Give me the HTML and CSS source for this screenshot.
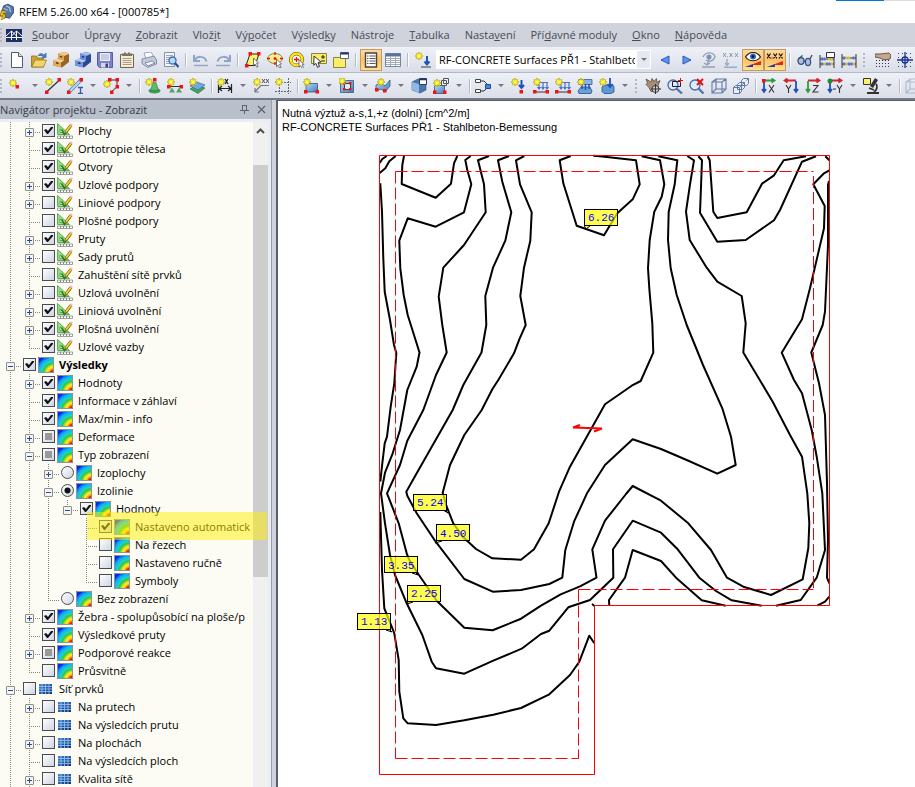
FILE: index.html
```html
<!DOCTYPE html>
<html lang="cs">
<head>
<meta charset="utf-8">
<title>RFEM 5.26.00 x64 - [000785*]</title>
<link rel="stylesheet" href="styles.css">
</head>
<body>
<svg class="defs" aria-hidden="true">
<defs>
<linearGradient id="gBlue" x1="0" y1="0" x2="1" y2="1"><stop offset="0" stop-color="#b5d8f6"/><stop offset="1" stop-color="#3f7fc0"/></linearGradient>
<linearGradient id="gMesh" x1="0" y1="0" x2="1" y2="1"><stop offset="0" stop-color="#3f86d8"/><stop offset="1" stop-color="#0c2f70"/></linearGradient>
<g id="star"><path d="M4 0v8M0 4h8M1.2 1.2l5.6 5.6M6.8 1.2l-5.6 5.6" stroke="#a89c3c" stroke-width="1.6"/><path d="M4 .5v7M.5 4h7M1.5 1.500l5 5M6.500 1.500l-5 5" stroke="#fff000" stroke-width="1"/><circle cx="4" cy="4" r="1.800" fill="#ffff5a"/></g>
<g id="node"><path d="M0 0h3.500v3.500h-3.500z" fill="#f01414"/></g>
<g id="hand"><path d="M0 0l5 5-2 .4 1.6 3-1.4.8-1.6-3-1.6 1.4z" fill="#fff" stroke="#555" stroke-width=".8"/></g>
<symbol id="i-new" viewBox="0 0 16 16"><path d="M2.500.5h7l4 4v11h-11z" fill="#fff" stroke="#555b6b"/><path d="M9.500.5v4h4" fill="#dde4f0" stroke="#555b6b"/></symbol>
<symbol id="i-open" viewBox="0 0 16 16"><path d="M.5 15v-11h5l1 2h6v9z" fill="#d0a030" stroke="#8f7020" stroke-width=".8"/><path d="M.8 15l3.200-7h11.500l-3 7z" fill="#f0d670" stroke="#9a7a20" stroke-width=".8"/><path d="M7 4c1-3 5-3 6.500 0M15 1v4.500h-4z" fill="#4a7ab8" stroke="#4a7ab8"/></symbol>
<symbol id="i-boxb" viewBox="0 0 16 16"><path d="M5 1.500l7-1.500 4 2v8l-7 5.500-9-2v-5l5-2z" fill="#9a6424"/><path d="M5 1.500l7-1.500 4 2-5 2z" fill="#f2cc8a"/><path d="M5 1.500l6 2v5l-6-2z" fill="#dda85a"/><path d="M0 8.500l4-2 7 2-3 2z" fill="#f6d69c"/><path d="M0 8.500l8 2v5l-8-2z" fill="#e0ac60"/><path d="M7 4.500l2 .7M3 10.800l2.500.6" stroke="#402a0a" stroke-width="1.300"/></symbol>
<symbol id="i-boxu" viewBox="0 0 16 16"><path d="M5 1.500l7-1.500 4 2v8l-7 5.500-9-2v-5l5-2z" fill="#2c4a94"/><path d="M5 1.500l7-1.500 4 2-5 2z" fill="#a9c0f0"/><path d="M5 1.500l6 2v5l-6-2z" fill="#6b90dc"/><path d="M0 8.500l4-2 7 2-3 2z" fill="#b5caf5"/><path d="M0 8.500l8 2v5l-8-2z" fill="#7398e0"/><path d="M7 4.500l2 .7M3 10.800l2.500.6" stroke="#101f48" stroke-width="1.300"/></symbol>
<symbol id="i-save" viewBox="0 0 16 16"><path d="M.5.5h15v15h-13l-2-2z" fill="#7d82c4" stroke="#5a5f9c"/><path d="M3 1h10v8h-10z" fill="#eef0fb"/><path d="M4 3h8M4 5h8M4 7h8" stroke="#a3a9d0"/><path d="M4 11h8v4.500h-8z" fill="#d4d7ea"/><path d="M8.500 11.500h2.500v4h-2.500z" fill="#3a4274"/></symbol>
<symbol id="i-clip" viewBox="0 0 16 16"><path d="M1.500 2.500h13v13h-13z" fill="#f5ecd6" stroke="#6d624c"/><path d="M3 1.500h2v-1h2v1h2v-1h2v1h2v2.500h-10z" fill="#7c7260"/><path d="M3.500 6.500h9M3.500 8.500h9M3.500 10.500h9M3.500 12.500h9" stroke="#a89c84"/></symbol>
<symbol id="i-print" viewBox="0 0 16 16"><path d="M3 1l7-1 3 5-8 2z" fill="#fff" stroke="#8890a8" stroke-width=".8"/><path d="M1 7l12-3 2.500 4v4l-9 3.500-5.500-4z" fill="#c3c9de" stroke="#737a94" stroke-width=".8"/><path d="M4 11l7-2 3 2-7 3z" fill="#f5f7ff" stroke="#6a7494" stroke-width=".8"/></symbol>
<symbol id="i-prev" viewBox="0 0 16 16"><path d="M1.500.5h10v14h-10z" fill="#f3f5fa" stroke="#8990a6"/><path d="M3 3.500h7M3 5.500h7M3 7.500h3M3 9.500h3M3 11.500h4" stroke="#9ea5ba"/><circle cx="9.500" cy="8.500" r="3.500" fill="#b3dcf7" stroke="#3d6fae" stroke-width="1.300"/><path d="M12 11l3.500 4" stroke="#264f8c" stroke-width="2"/></symbol>
<symbol id="i-undo" viewBox="0 0 16 16"><path d="M1 3v6h6M1.500 8.500c3-5 10-5 12 1" fill="none" stroke="#8fa5c8" stroke-width="2"/><path d="M1 13.500h14" stroke="#9aa7c0" stroke-width="1.500"/></symbol>
<symbol id="i-redo" viewBox="0 0 16 16"><path d="M15 3v6h-6M14.500 8.500c-3-5-10-5-12 1" fill="none" stroke="#8fa5c8" stroke-width="2"/><path d="M1 13.500h14" stroke="#9aa7c0" stroke-width="1.500"/></symbol>
<symbol id="i-sel1" viewBox="0 0 16 16"><path d="M5 2h9l-4 11.500h-9z" fill="#fbf36a" stroke="#222"/><use href="#node" x="3.500" y="0"/><use href="#node" x="12" y="0"/><use href="#node" x="0" y="12"/><use href="#hand" x="8.500" y="6"/></symbol>
<symbol id="i-sel2" viewBox="0 0 16 16"><ellipse cx="8" cy="6.500" rx="7.300" ry="5" fill="#f8ee8a" stroke="#8d8650"/><path d="M8 0v3M8 10v3M0 6.500h3M13 6.500h3M6.500 6.500h3M8 5v3" stroke="#e31212" stroke-width="1.300"/><use href="#hand" x="9.500" y="7"/></symbol>
<symbol id="i-sel3" viewBox="0 0 16 16"><circle cx="7.500" cy="7.500" r="5.800" fill="#fff" stroke="#7a6900" stroke-width="3.600"/><circle cx="7.500" cy="7.500" r="5.800" fill="none" stroke="#ffe81a" stroke-width="2.200"/><path d="M7.500 5v5M5 7.500h5" stroke="#e31212" stroke-width="1.300"/><use href="#hand" x="10" y="7.500"/></symbol>
<symbol id="i-sel4" viewBox="0 0 16 16"><path d="M.5 1.500h15v10h-15z" fill="#f8ee6a" stroke="#8a8440"/><path d="M12 3v4M10 5h4M10 9h4" stroke="#222"/><path d="M3 4l7 6-3 .5 1.500 4-2 .8-1.700-4-2 2z" fill="#fff" stroke="#333"/></symbol>
<symbol id="i-sel5" viewBox="0 0 16 16"><path d="M.5 5.500h12v10h-12z" fill="#f8ee6a" stroke="#8a8440"/><path d="M7.500.5h8v6h-8z" fill="#fff" stroke="#5d6682"/><path d="M7.500 1.500h8" stroke="#26345f" stroke-width="2"/></symbol>
<symbol id="i-list" viewBox="0 0 16 16"><path d="M2.500 1h11v14h-11z" fill="#fff" stroke="#444" stroke-width="1.400"/><path d="M4 4h1.500M4 6.500h1.500M4 9h1.500M4 11.500h1.500M6.500 4h6M6.500 6.500h6M6.500 9h6M6.500 11.500h6" stroke="#555"/></symbol>
<symbol id="i-table" viewBox="0 0 16 16"><path d="M.5 1.500h15v13h-15z" fill="#fff" stroke="#7c8496"/><path d="M.5 1.500h15v3h-15z" fill="#5a72a2"/><path d="M1 6.500h14M1 8.500h14M1 10.500h14M1 12.500h14M5.500 5v9M10.500 5v9" stroke="#a2a9b8"/></symbol>
<symbol id="i-load" viewBox="0 0 16 16"><use href="#star" x="0" y="0"/><path d="M12 4v8M9.500 9.500l2.500 3 2.500-3" fill="none" stroke="#2451b8" stroke-width="2"/><path d="M6 15h10" stroke="#677" stroke-width="1.500"/></symbol>
<symbol id="i-left" viewBox="0 0 16 16"><path d="M12 4v8l-8-4z" fill="#5d93f0" stroke="#2d56b8"/></symbol>
<symbol id="i-right" viewBox="0 0 16 16"><path d="M4 4v8l8-4z" fill="#5d93f0" stroke="#2d56b8"/></symbol>
<symbol id="i-eyeg" viewBox="0 0 16 16"><path d="M2 5c3-6 11-5 12 0-2 5-7 5-9 3M8 7l-2 6M3 11l3 2 3-2M1 15h13" fill="none" stroke="#96a1b8" stroke-width="1.400"/><circle cx="8" cy="5" r="2.500" fill="#7891b5"/></symbol>
<symbol id="i-xxg" viewBox="0 0 16 16"><path d="M0 1l3 4M3 1l-3 4M6.500 1l3 4M9.500 1l-3 4M12 1l3 4M15 1l-3 4M4.500 4.500v1" stroke="#8f97a9"/><path d="M4 7v6M2 11l2 2.500 2-2.500M1 15.300h13" fill="none" stroke="#9baac5" stroke-width="1.400"/></symbol>
<symbol id="i-eye" viewBox="0 0 16 16"><path d="M.5 5c4-6 11-6 15 0-4 5-11 5-15 0z" fill="#fff" stroke="#222" stroke-width="1.200"/><circle cx="8" cy="4.500" r="3" fill="#2a6cc0"/><circle cx="8" cy="4.500" r="1.300" fill="#001"/><path d="M0 15l8-3v3z" fill="#2436b0"/><path d="M8 12l8-3v4l-8 0z" fill="#dc2a1a"/></symbol>
<symbol id="i-xx" viewBox="0 0 16 16"><path d="M0 1.500l3.500 5M3.500 1.500l-3.500 5M6.500 1.500l3.500 5M10 1.500l-3.500 5M12 1.500l3.500 5M15.500 1.500l-3.500 5M4.500 6h1" stroke="#111" stroke-width="1.200"/><path d="M0 15l8-3v3z" fill="#2436b0"/><path d="M8 12l8-3v4l-8 0z" fill="#dc2a1a"/></symbol>
<symbol id="i-glass" viewBox="0 0 16 16"><g fill="#a9c2e4" stroke="#3c5078" stroke-width="1.300"><ellipse cx="4" cy="9" rx="3" ry="3.300"/><ellipse cx="11" cy="10" rx="2.600" ry="3.600"/></g><path d="M7 9l1.500.5M1.500 7l4-3.500M13 7l2-4" fill="none" stroke="#3c5078" stroke-width="1.400"/></symbol>
<symbol id="i-abac1" viewBox="0 0 16 16"><path d="M1 3v13M15 3v13M1 7h14M1 12h14" stroke="#333"/><path d="M3 5.500v3M5.500 5.500v3M3 10.500v3M8 10.500v3M10.500 10.500v3" stroke="#5577c4" stroke-width="2"/><path d="M10 5.500v3M12.500 5.500v3M5.500 10.500v3M12.800 10.500v3" stroke="#e3c13a" stroke-width="2"/><path d="M7.500.5h8v5h-8z" fill="#fff" stroke="#334"/></symbol>
<symbol id="i-abac2" viewBox="0 0 16 16"><path d="M1 2v14M15 2v14M1 6h14M1 12h14" stroke="#333"/><path d="M3 4.500v3M12.500 4.500v3M3 10.500v3M8 10.500v3M10.500 10.500v3" stroke="#5577c4" stroke-width="2"/><path d="M5.500 4.500v3M8 4.500v3M5.500 10.500v3M12.800 10.500v3" stroke="#e3c13a" stroke-width="2"/></symbol>
<symbol id="i-grid" viewBox="0 0 16 16"><path d="M1 8.500h14M1 11.500h14M1 14.500h14" stroke="#333" stroke-dasharray="1 2"/><path d="M0 2h5l9-1 2 2-1 4-6 1-4-2-5-1z" fill="#c4a890" stroke="#4c3b30" stroke-width=".8"/></symbol>
<symbol id="i-snap" viewBox="0 0 16 16"><path d="M1 1.500h14M1 5.500h14M1 10.500h14M1 14.500h14" stroke="#445" stroke-dasharray="1 3"/><path d="M8 0v16M0 8h16" stroke="#1c3390" stroke-width="1.300"/><circle cx="8" cy="8" r="3" fill="none" stroke="#1c3390" stroke-width="1.300"/></symbol>
<symbol id="j-node" viewBox="0 0 16 16"><use href="#star" x="0" y="1"/><use href="#node" x="6.500" y="7"/></symbol>
<symbol id="j-line" viewBox="0 0 16 16"><path d="M2 13.500l12-11" stroke="#333" stroke-width="1.300"/><use href="#star" x="0" y="0"/><use href="#node" x="12.500" y="0"/><use href="#node" x="0" y="12.500"/></symbol>
<symbol id="j-mem" viewBox="0 0 16 16"><path d="M2 14l12-12" stroke="#5f7fae" stroke-width="3.500"/><path d="M2 14l12-12" stroke="#c0d6f0" stroke-width="1.800"/><use href="#star" x="0" y="0"/><path d="M11 9.500h5M13.500 9.500v6M11 15.500h5" stroke="#345ba8" stroke-width="1.300"/><use href="#node" x="0" y="12.500"/><use href="#node" x="12.500" y="0"/></symbol>
<symbol id="j-poly" viewBox="0 0 16 16"><path d="M5 2h9v7l-6 5" fill="none" stroke="#333"/><use href="#star" x="0" y="2"/><use href="#node" x="5" y="0"/><use href="#node" x="12.500" y="0"/><use href="#node" x="12.500" y="7"/><use href="#node" x="7" y="12.500"/></symbol>
<symbol id="j-sup" viewBox="0 0 16 16"><ellipse cx="9.500" cy="12.800" rx="6" ry="2.800" fill="#3d9a55"/><path d="M8 4.500h3l2.500 8h-8z" fill="#5db872" stroke="#2f7a42" stroke-width=".6"/><use href="#star" x="0" y="0"/><use href="#node" x="8" y="0"/></symbol>
<symbol id="j-lsup" viewBox="0 0 16 16"><path d="M2 8.500h12" stroke="#333"/><path d="M5 9.500l3 5h-6zM12 9.500l3 5h-6z" fill="#4aa862"/><use href="#star" x="0" y="0"/><use href="#node" x="0" y="7"/><use href="#node" x="12.500" y="7"/></symbol>
<symbol id="j-ssup" viewBox="0 0 16 16"><path d="M1 11l7-4 8 3-7 5.500z" fill="#46a658" stroke="#1f6a30" stroke-width=".6"/><path d="M1 8l7-4 8 3-7 5z" fill="#74a9e0" stroke="#2d5f9c" stroke-width=".6"/><use href="#star" x="0" y="0"/></symbol>
<symbol id="j-dim" viewBox="0 0 16 16"><path d="M1.500 6v9M14.500 6v9M2 10.500h12M5 8l-3 2.500 3 2.500M11 8l3 2.500-3 2.500" fill="none" stroke="#222" stroke-width="1.200"/><path d="M8 1l3 5M11 1l-3 5" stroke="#222" stroke-width="1.300"/><use href="#star" x="0" y="0"/></symbol>
<symbol id="j-txt" viewBox="0 0 16 16"><use href="#star" x="0" y="0"/><path d="M9 1l3 4M12 1l-3 4M13 1l3 4M16 1l-3 4" stroke="#444" stroke-width=".9"/><path d="M16 7.500h-8l-6 6M2 10v4h4" fill="none" stroke="#777" stroke-width="1.200"/></symbol>
<symbol id="j-frame" viewBox="0 0 16 16"><path d="M4.500 0v16M13.500 0v16M0 4.500h16M0 13.500h16" stroke="#666" stroke-dasharray="2 1"/><use href="#star" x="0" y="0"/></symbol>
<symbol id="j-surf" viewBox="0 0 16 16"><path d="M3 5.500h11.500v8.500h-11.500z" fill="url(#gBlue)" stroke="#35567f" stroke-width=".8"/><use href="#star" x="0" y="0"/><use href="#node" x="1" y="12"/><use href="#node" x="12.500" y="12"/></symbol>
<symbol id="j-open" viewBox="0 0 16 16"><path d="M1.500 2.500h13v12h-13z" fill="url(#gBlue)" stroke="#35567f" stroke-width=".8"/><path d="M5.500 5.500h6v6h-6z" fill="#e6eaf2" stroke="#444"/><g fill="#f01414"><path d="M4 4h2.500v2.500h-2.500zM10 4h2.500v2.500h-2.500zM4 10h2.500v2.500h-2.500zM10 10h2.500v2.500h-2.500z"/></g><use href="#star" x="-1" y="-1"/></symbol>
<symbol id="j-fold" viewBox="0 0 16 16"><path d="M1 7l5-2 4 3 5-6v6l-5 6-4-3-5 2z" fill="url(#gBlue)" stroke="#35567f" stroke-width=".8"/><use href="#star" x="2" y="0"/><use href="#node" x="0" y="10"/><use href="#node" x="8" y="11"/></symbol>
<symbol id="j-solid" viewBox="0 0 16 16"><path d="M1 4l6-3 8 2v9l-6 3-8-3z" fill="#4778b0" stroke="#2f4d76" stroke-width=".6"/><path d="M1 4l7 2v9l-7-3z" fill="#8fb8e2"/><path d="M8.500.5h7v6h-7z" fill="#fff" stroke="#2a3b66"/><path d="M8.500 1.500h7" stroke="#26345f" stroke-width="1.500"/></symbol>
<symbol id="j-box" viewBox="0 0 16 16"><path d="M1.500 7.500h10v8h-10z" fill="url(#gBlue)" stroke="#35567f" stroke-width=".8"/><path d="M8.500 2.500h5v5h-5zM10.500.5h5v5h-5z" fill="#eef1f8" stroke="#555"/><use href="#star" x="0" y="1"/><use href="#node" x="0" y="12.500"/><use href="#node" x="10" y="12.500"/></symbol>
<symbol id="j-link" viewBox="0 0 16 16"><path d="M.5 1.500h5v3h-5zM.5 11.500h5v3h-5z" fill="#fff" stroke="#444"/><path d="M6 3h3l3 3M6 13h3l3-3" fill="none" stroke="#333"/><path d="M10.500 6.500h5v4h-5z" fill="#3d8ae0" stroke="#1d4a90"/></symbol>
<symbol id="j-nload" viewBox="0 0 16 16"><use href="#star" x="0" y="0"/><path d="M10.500 2v7M8 7l2.500 3 2.500-3" fill="none" stroke="#2451b8" stroke-width="2"/><use href="#node" x="8.500" y="12"/></symbol>
<symbol id="j-lload" viewBox="0 0 16 16"><path d="M3 4.500h12M6 4v7M10 4v7M14 4v7M4.500 9l1.500 2 1.500-2M8.500 9l1.500 2 1.500-2M12.500 9l1.500 2 1.500-2" fill="none" stroke="#4a70cc" stroke-width="1.200"/><path d="M1 14h14" stroke="#333"/><use href="#star" x="0" y="0"/><use href="#node" x="0" y="12"/><use href="#node" x="12.500" y="12"/></symbol>
<symbol id="j-sload" viewBox="0 0 16 16"><path d="M2 1.500h13v5h-13z" fill="#88b4e8" stroke="#3a5d96" stroke-width=".8"/><path d="M1 13l3-4h9l2 4-1 2.500h-12z" fill="#6a9fd8" stroke="#26508e" stroke-width=".8"/><path d="M5 6v5M8.500 6v6M12 6v5" stroke="#2451b8" stroke-width="1.500"/><use href="#star" x="0" y="0"/></symbol>
<symbol id="j-gload" viewBox="0 0 16 16"><path d="M3 9l4-2h7l1 2v5l-3 1.500h-7l-2-2z" fill="#5e98d6" stroke="#26508e" stroke-width=".8"/><path d="M11 0v8M8.500 6l2.500 3 2.500-3" fill="none" stroke="#2451b8" stroke-width="1.800"/><use href="#star" x="0" y="0"/></symbol>
<symbol id="j-pan" viewBox="0 0 16 16"><path d="M1 1l5 3 1-3.500 2 3 2.500-3 .5 4 3-2-2 5 1 3-3 3h-5l-2-4-3-3 1.500-1.500z" fill="#a98c74" stroke="#5d4a3c" stroke-width=".8"/><circle cx="10.500" cy="11" r="3.500" fill="#c9ccd4" stroke="#444"/><path d="M10.500 6v10M6 11h10" stroke="#333"/></symbol>
<symbol id="j-zoomw" viewBox="0 0 16 16"><circle cx="6" cy="7" r="5" fill="#dcecfb" stroke="#4a6aa4" stroke-width="1.300"/><path d="M5.500 3.500h8v5h-8z" fill="none" stroke="#222"/><path d="M13.500 0v5M11 2.500h5" stroke="#e31212"/><path d="M9.500 10.500l5.500 5" stroke="#4f72b8" stroke-width="2.300"/></symbol>
<symbol id="j-zoomx" viewBox="0 0 16 16"><circle cx="6" cy="7" r="5" fill="#dcecfb" stroke="#4a6aa4" stroke-width="1.300"/><path d="M8 1l6 6M14 1l-6 6" stroke="#e31212" stroke-width="2"/><path d="M9.500 10.500l5 5" stroke="#4f72b8" stroke-width="2.300"/></symbol>
<symbol id="j-cube" viewBox="0 0 16 16"><path d="M1 4l4-3h10v10l-4 4h-10zM1 4h10v11M11 4l4-3M5 1v10h10M5 11l-4 4" fill="none" stroke="#6478a4" stroke-width="1.100"/></symbol>
<symbol id="j-cubes" viewBox="0 0 16 16"><path d="M8.500 2.500l2-2h5v5l-2 2h-5zM4.500 6.500l2-2h5v5l-2 2h-5zM.500 9.500l2-2h6v6l-2 2h-6z" fill="#e8ecf6" stroke="#6478a4"/><path d="M.5 9.500h6v6M6.500 9.500l2-2M11.500 4.500l-2 2M13.500 2.500l2-2" fill="none" stroke="#6478a4"/></symbol>
<symbol id="j-x" viewBox="0 0 16 16"><path d="M3 2.500h10M10.500.5l3 2-3 2" fill="none" stroke="#2f9e3a" stroke-width="1.800"/><path d="M3 3v10M1 11l2 3 2-3" fill="none" stroke="#2451b8" stroke-width="1.800"/><use href="#node" x="1" y="1"/><path d="M8 7l5 7.500M13 7l-5 7.500" stroke="#333" stroke-width="1.100"/></symbol>
<symbol id="j-y" viewBox="0 0 16 16"><path d="M13 2.500h-11M4.500.5l-3 2 3 2" fill="none" stroke="#d8232f" stroke-width="1.800"/><path d="M13 3v10M11 11l2 3 2-3" fill="none" stroke="#2451b8" stroke-width="1.800"/><path d="M3 7l2.500 4 2.500-4M5.500 11v4" fill="none" stroke="#333" stroke-width="1.100"/></symbol>
<symbol id="j-z" viewBox="0 0 16 16"><path d="M3 2.500h11M11.500.5l3 2-3 2" fill="none" stroke="#d8232f" stroke-width="1.800"/><path d="M3 3v10M1 11l2 3 2-3" fill="none" stroke="#2f9e3a" stroke-width="1.800"/><path d="M8 7.500h5l-5 6.500h5.500" fill="none" stroke="#333" stroke-width="1.100"/></symbol>
<symbol id="j-my" viewBox="0 0 16 16"><path d="M4 2.500h10M11.500.5l3 2-3 2" fill="none" stroke="#d8232f" stroke-width="1.800"/><path d="M3 3v10M1 11l2 3 2-3" fill="none" stroke="#2451b8" stroke-width="1.800"/><circle cx="3" cy="3" r="2.500" fill="#228a30"/><path d="M6 11h3M10 7l2.500 4 2.500-4M12.500 11v4" fill="none" stroke="#333" stroke-width="1.100"/></symbol>
<symbol id="j-mic" viewBox="0 0 16 16"><path d="M13.500 1l-5 8" stroke="#333" stroke-width="3.500"/><path d="M13 6c2 2 1 6-2 8M6 10l5 2M4 15h12" fill="none" stroke="#333" stroke-width="1.800"/><path d="M.5.5h7v6h-7z" fill="#fbf36a" stroke="#333"/></symbol>
<symbol id="t-plan" viewBox="0 0 16 16"><path d="M.5.500v11h12z" fill="#8fe07c" stroke="#4a9a40" stroke-width=".8"/><path d="M3 6v3.500h4z" fill="#fbfbf3" stroke="#4a9a40" stroke-width=".8"/><path d="M4.500 6.500l3 5 6-7.500" fill="none" stroke="#2f7a2a" stroke-width="1.600"/><path d="M8 10.500l.5-3 4.500-6 2 1.500-4.500 6z" fill="#f5cb24" stroke="#6b5a20" stroke-width=".7"/><path d="M12.700 1.800l1.200-1.500 2 1.500-1.200 1.500z" fill="#efb2cc"/><path d="M.5 13h15v2.500h-15z" fill="#fff" stroke="#888" stroke-width=".8"/><path d="M3.500 13v2M6.500 13v2M9.500 13v2M12.500 13v2" stroke="#888"/></symbol>
<symbol id="t-iso" viewBox="0 0 16 16"><path d="M0 0h16v16h-16z" fill="#0a28e0"/><circle cx="16" cy="17" r="18.500" fill="#0a78f8"/><circle cx="16" cy="17" r="16.500" fill="#12b8f0"/><circle cx="16" cy="17" r="14" fill="#20d0c0"/><circle cx="16" cy="17" r="12" fill="#30c858"/><circle cx="16" cy="17" r="10" fill="#a0d828"/><circle cx="16" cy="17" r="8.500" fill="#f8e818"/><circle cx="16" cy="17" r="6" fill="#f8a018"/><circle cx="16" cy="17" r="4.500" fill="#e82018"/><path d="M.5.5h15v15h-15z" fill="none" stroke="#8c949c"/></symbol>
<symbol id="t-mesh" viewBox="0 0 16 16"><path d="M1 3h13v10h-13z" fill="url(#gMesh)"/><path d="M1 5.500h13M1 8h13M1 10.500h13M4 3v10M7.500 3v10M11 3v10" stroke="#9cc8f4" stroke-width=".8"/></symbol>
</defs>
</svg>

<header class="titlebar">
<svg class="logo" viewBox="0 0 16 18" aria-hidden="true"><path d="M4 2l5-2 6 3 1 6-5 7-6-1-3-6z" fill="#5577a8" stroke="#2c4468"/><path d="M7 2l4 2 1 5M4 5l5 2" fill="none" stroke="#a9c2e2" stroke-width="1.500"/><path d="M6.500 9h-4l-.5 3c4-1 4 4.500-1 4" fill="none" stroke="#7a5c00" stroke-width="3.500"/><path d="M6.500 9h-4l-.5 3c4-1 4 4.500-1 4" fill="none" stroke="#f5c81e" stroke-width="1.800"/></svg>
<h1>RFEM 5.26.00 x64 - [000785*]</h1>
<span class="winedge"></span>
</header>

<nav class="menubar" aria-label="Menu">
<span class="grip"></span>
<svg class="mdi" viewBox="0 0 16 13" aria-hidden="true"><path d="M0 0h16v13h-16z" fill="#1d2f66"/><path d="M0 8.500h16M5.500 2v9M10.500 2v9M0 7l5.500-5 5 5M5.500 7l5-5 5.500 5" fill="none" stroke="#fff"/></svg>
<a href="#"><u>S</u>oubor</a><a href="#">Úpr<u>a</u>vy</a><a href="#"><u>Z</u>obrazit</a><a href="#">Vlož<u>i</u>t</a><a href="#">Vý<u>p</u>očet</a><a href="#">Výsled<u>k</u>y</a><a href="#">Nástroje</a><a href="#"><u>T</u>abulka</a><a href="#">Nasta<u>v</u>ení</a><a href="#">Pří<u>d</u>avné moduly</a><a href="#"><u>O</u>kno</a><a href="#"><u>N</u>ápověda</a>
</nav>

<div class="toolbar main-bar" role="toolbar" aria-label="Standardní">
<span class="grip"></span>
<button aria-label="Nový"><svg><use href="#i-new"/></svg></button><button aria-label="Otevřít"><svg><use href="#i-open"/></svg></button><button aria-label="Archiv"><svg><use href="#i-boxb"/></svg></button><button aria-label="Projekty"><svg><use href="#i-boxu"/></svg></button><button aria-label="Uložit"><svg><use href="#i-save"/></svg></button><button aria-label="Protokol"><svg><use href="#i-clip"/></svg></button><button aria-label="Tisk"><svg><use href="#i-print"/></svg></button><button aria-label="Náhled"><svg><use href="#i-prev"/></svg></button>
<span class="sep"></span>
<button aria-label="Zpět"><svg><use href="#i-undo"/></svg></button><button aria-label="Znovu"><svg><use href="#i-redo"/></svg></button>
<span class="sep"></span>
<button aria-label="Výběr rovinou"><svg><use href="#i-sel1"/></svg></button><button aria-label="Výběr elipsou"><svg><use href="#i-sel2"/></svg></button><button aria-label="Výběr prstencem"><svg><use href="#i-sel3"/></svg></button><button aria-label="Výběr oknem"><svg><use href="#i-sel4"/></svg></button><button aria-label="Zvláštní výběr"><svg><use href="#i-sel5"/></svg></button>
<span class="sep"></span>
<button class="on" aria-label="Navigátor"><svg><use href="#i-list"/></svg></button><button aria-label="Tabulka"><svg><use href="#i-table"/></svg></button>
<span class="sep"></span>
<button aria-label="Nový stav"><svg><use href="#i-load"/></svg></button>
<span class="combo"><select aria-label="Případ"><option>RF-CONCRETE Surfaces PŘ1 - Stahlbeton-Bemessung</option></select><span class="combo-arrow"></span></span>
<button aria-label="Předchozí"><svg><use href="#i-left"/></svg></button><button aria-label="Další"><svg><use href="#i-right"/></svg></button><button aria-label="Zobrazit zatížení"><svg><use href="#i-eyeg"/></svg></button><button aria-label="Hodnoty zatížení"><svg><use href="#i-xxg"/></svg></button><button class="on" aria-label="Zobrazit výsledky"><svg><use href="#i-eye"/></svg></button><button class="on" aria-label="Hodnoty výsledků"><svg><use href="#i-xx"/></svg></button>
<span class="sep"></span>
<button aria-label="Viditelnost"><svg><use href="#i-glass"/></svg></button><button aria-label="Výpočet modulu"><svg><use href="#i-abac1"/></svg></button><button aria-label="Spustit výpočet"><svg><use href="#i-abac2"/></svg></button>
<span class="grip mid"></span>
<button aria-label="Rastr"><svg><use href="#i-grid"/></svg></button><button aria-label="Uchopení"><svg><use href="#i-snap"/></svg></button>
</div>

<div class="toolbar model-bar" role="toolbar" aria-label="Vložit">
<span class="grip"></span>
<button aria-label="Uzel"><svg><use href="#j-node"/></svg></button><button class="dd" aria-label="Další"></button><button aria-label="Linie"><svg><use href="#j-line"/></svg></button><button aria-label="Prut"><svg><use href="#j-mem"/></svg></button><button class="dd" aria-label="Další"></button><button aria-label="Polylinie"><svg><use href="#j-poly"/></svg></button><button class="dd" aria-label="Další"></button>
<span class="sep"></span>
<button aria-label="Uzlová podpora"><svg><use href="#j-sup"/></svg></button><button aria-label="Liniová podpora"><svg><use href="#j-lsup"/></svg></button><button aria-label="Plošná podpora"><svg><use href="#j-ssup"/></svg></button>
<span class="sep"></span>
<button aria-label="Kóta"><svg><use href="#j-dim"/></svg></button><button class="dd" aria-label="Další"></button><button aria-label="Komentář"><svg><use href="#j-txt"/></svg></button><button aria-label="Vodicí linie"><svg><use href="#j-frame"/></svg></button>
<span class="sep"></span>
<button aria-label="Plocha"><svg><use href="#j-surf"/></svg></button><button class="dd" aria-label="Další"></button><button aria-label="Otvor"><svg><use href="#j-open"/></svg></button><button class="dd" aria-label="Další"></button><button aria-label="Průnik"><svg><use href="#j-fold"/></svg></button><button class="dd" aria-label="Další"></button><button aria-label="Těleso"><svg><use href="#j-solid"/></svg></button><button aria-label="Sada"><svg><use href="#j-box"/></svg></button><button class="dd" aria-label="Další"></button>
<span class="sep"></span>
<button aria-label="Kombinace"><svg><use href="#j-link"/></svg></button><button class="dd" aria-label="Další"></button><button aria-label="Uzlové zatížení"><svg><use href="#j-nload"/></svg></button><button aria-label="Zatížení na prut"><svg><use href="#j-lload"/></svg></button><button aria-label="Zatížení na linii"><svg><use href="#j-lload"/></svg></button><button aria-label="Zatížení na plochu"><svg><use href="#j-sload"/></svg></button><button aria-label="Generátor zatížení"><svg><use href="#j-gload"/></svg></button><button class="dd" aria-label="Další"></button>
<span class="grip mid"></span>
<button aria-label="Posun"><svg><use href="#j-pan"/></svg></button><button aria-label="Zvětšit oknem"><svg><use href="#j-zoomw"/></svg></button><button aria-label="Zobrazit vše"><svg><use href="#j-zoomx"/></svg></button><button aria-label="Izometrie"><svg><use href="#j-cube"/></svg></button><button aria-label="Perspektiva"><svg><use href="#j-cubes"/></svg></button>
<span class="sep"></span>
<button aria-label="Pohled X"><svg><use href="#j-x"/></svg></button><button aria-label="Pohled Y"><svg><use href="#j-y"/></svg></button><button aria-label="Pohled Z"><svg><use href="#j-z"/></svg></button><button aria-label="Pohled -Y"><svg><use href="#j-my"/></svg></button><button class="dd" aria-label="Další"></button><button aria-label="Detail"><svg><use href="#j-mic"/></svg></button><button class="dd" aria-label="Další"></button>
<span class="sep"></span>
<button class="off" aria-label="Model"><svg><use href="#j-cube"/></svg></button>
</div>

<main class="work">
<aside class="nav">
<div class="nav-head"><h2>Navigátor projektu - Zobrazit</h2>
<button aria-label="Připnout"><svg viewBox="0 0 9 9"><path d="M2.500 0v5M6.500 0v5M2 .5h5M0 5.500h9M4.500 6v3" stroke="#5c6272"/></svg></button>
<button aria-label="Zavřít"><svg viewBox="0 0 9 9"><path d="M1 1l7 7M8 1l-7 7" stroke="#5c6272" stroke-width="1.200"/></svg></button></div>
<div class="nav-body">
<ul class="tree">
<li><ul>
<li><div class="row"><button class="exp" aria-label="Rozbalit"></button><label><input type="checkbox" checked><svg><use href="#t-plan"/></svg>Plochy</label></div></li>
<li><div class="row"><label><input type="checkbox" checked><svg><use href="#t-plan"/></svg>Ortotropie tělesa</label></div></li>
<li><div class="row"><label><input type="checkbox" checked><svg><use href="#t-plan"/></svg>Otvory</label></div></li>
<li><div class="row"><button class="exp" aria-label="Rozbalit"></button><label><input type="checkbox" checked><svg><use href="#t-plan"/></svg>Uzlové podpory</label></div></li>
<li><div class="row"><button class="exp" aria-label="Rozbalit"></button><label><input type="checkbox"><svg><use href="#t-plan"/></svg>Liniové podpory</label></div></li>
<li><div class="row"><label><input type="checkbox"><svg><use href="#t-plan"/></svg>Plošné podpory</label></div></li>
<li><div class="row"><button class="exp" aria-label="Rozbalit"></button><label><input type="checkbox" checked><svg><use href="#t-plan"/></svg>Pruty</label></div></li>
<li><div class="row"><button class="exp" aria-label="Rozbalit"></button><label><input type="checkbox"><svg><use href="#t-plan"/></svg>Sady prutů</label></div></li>
<li><div class="row"><label><input type="checkbox"><svg><use href="#t-plan"/></svg>Zahuštění sítě prvků</label></div></li>
<li><div class="row"><button class="exp" aria-label="Rozbalit"></button><label><input type="checkbox"><svg><use href="#t-plan"/></svg>Uzlová uvolnění</label></div></li>
<li><div class="row"><button class="exp" aria-label="Rozbalit"></button><label><input type="checkbox" checked><svg><use href="#t-plan"/></svg>Liniová uvolnění</label></div></li>
<li><div class="row"><button class="exp" aria-label="Rozbalit"></button><label><input type="checkbox" checked><svg><use href="#t-plan"/></svg>Plošná uvolnění</label></div></li>
<li><div class="row"><label><input type="checkbox" checked><svg><use href="#t-plan"/></svg>Uzlové vazby</label></div></li>
</ul></li>
<li><div class="row"><button class="exp open" aria-label="Sbalit"></button><label><input type="checkbox" checked><svg><use href="#t-iso"/></svg><b>Výsledky</b></label></div>
<ul>
<li><div class="row"><button class="exp" aria-label="Rozbalit"></button><label><input type="checkbox" checked><svg><use href="#t-iso"/></svg>Hodnoty</label></div></li>
<li><div class="row"><label><input type="checkbox" checked><svg><use href="#t-iso"/></svg>Informace v záhlaví</label></div></li>
<li><div class="row"><label><input type="checkbox" checked><svg><use href="#t-iso"/></svg>Max/min - info</label></div></li>
<li><div class="row"><button class="exp" aria-label="Rozbalit"></button><label><input type="checkbox" class="mixed"><svg><use href="#t-iso"/></svg>Deformace</label></div></li>
<li><div class="row"><button class="exp open" aria-label="Sbalit"></button><label><input type="checkbox" class="mixed"><svg><use href="#t-iso"/></svg>Typ zobrazení</label></div>
<ul>
<li><div class="row"><button class="exp" aria-label="Rozbalit"></button><label><input type="radio" name="typ"><svg><use href="#t-iso"/></svg>Izoplochy</label></div></li>
<li><div class="row"><button class="exp open" aria-label="Sbalit"></button><label><input type="radio" name="typ" checked><svg><use href="#t-iso"/></svg>Izolinie</label></div>
<ul><li><div class="row"><button class="exp open" aria-label="Sbalit"></button><label><input type="checkbox" checked><svg><use href="#t-iso"/></svg>Hodnoty</label></div>
<ul>
<li><div class="row"><label><input type="checkbox" checked><svg><use href="#t-iso"/></svg>Nastaveno automatick</label></div></li>
<li><div class="row"><label><input type="checkbox"><svg><use href="#t-iso"/></svg>Na řezech</label></div></li>
<li><div class="row"><label><input type="checkbox"><svg><use href="#t-iso"/></svg>Nastaveno ručně</label></div></li>
<li><div class="row"><label><input type="checkbox"><svg><use href="#t-iso"/></svg>Symboly</label></div></li>
</ul></li></ul></li>
<li><div class="row"><label><input type="radio" name="typ"><svg><use href="#t-iso"/></svg>Bez zobrazení</label></div></li>
</ul></li>
<li><div class="row"><button class="exp" aria-label="Rozbalit"></button><label><input type="checkbox" checked><svg><use href="#t-iso"/></svg>Žebra - spolupůsobící na ploše/p</label></div></li>
<li><div class="row"><label><input type="checkbox" checked><svg><use href="#t-iso"/></svg>Výsledkové pruty</label></div></li>
<li><div class="row"><button class="exp" aria-label="Rozbalit"></button><label><input type="checkbox" class="mixed"><svg><use href="#t-iso"/></svg>Podporové reakce</label></div></li>
<li><div class="row"><label><input type="checkbox"><svg><use href="#t-iso"/></svg>Průsvitně</label></div></li>
</ul></li>
<li class="more"><div class="row"><button class="exp open" aria-label="Sbalit"></button><label><input type="checkbox"><svg><use href="#t-mesh"/></svg>Síť prvků</label></div>
<ul>
<li><div class="row"><button class="exp" aria-label="Rozbalit"></button><label><input type="checkbox"><svg><use href="#t-mesh"/></svg>Na prutech</label></div></li>
<li><div class="row"><label><input type="checkbox"><svg><use href="#t-mesh"/></svg>Na výsledcích prutu</label></div></li>
<li><div class="row"><button class="exp" aria-label="Rozbalit"></button><label><input type="checkbox"><svg><use href="#t-mesh"/></svg>Na plochách</label></div></li>
<li><div class="row"><label><input type="checkbox"><svg><use href="#t-mesh"/></svg>Na výsledcích ploch</label></div></li>
<li class="more"><div class="row"><button class="exp" aria-label="Rozbalit"></button><label><input type="checkbox"><svg><use href="#t-mesh"/></svg>Kvalita sítě</label></div></li>
</ul></li>
</ul>
<div class="scroll"><svg viewBox="0 0 15 18" aria-hidden="true"><path d="M4 11l3.500-3.500 3.500 3.500" fill="none" stroke="#505050" stroke-width="2"/></svg><span class="thumb"></span></div>
<span class="marker"></span>
</div>
</aside>

<section class="view">
<svg class="plot" viewBox="278 101 637 686" preserveAspectRatio="xMinYMin meet" role="img" aria-label="Izolinie výztuže">
<g class="iso">
<path d="M386.700 156L382.300 159L379.700 163M395.700 156L389.300 161.300L385.300 168.300L379.700 173"/>
<path d="M380.300 183.300L382 211.700L383.300 258.300L384.700 291.700L390 320L394 345L396.300 353L394.300 383.300L390.700 406.700L387 436.700L384.700 443.300L382.300 463.300L380.300 481.700"/>
<path d="M380.300 512L382 570L384.300 608.300L391.700 626.700L394.300 633.300L398.700 660L399.300 691.700L403.300 718.300L407.700 723.300L436 725L464.300 720.300L493.300 714.700L521 708L549.300 694.300L570 675L579.300 661.700L589.300 635.700L594.300 643.300"/>
<path d="M404 156L402.300 165L401.700 184L435.700 197.700L451 183.700L454 163.300L457.300 156"/>
<path d="M470.700 156L465.300 160L467.300 170L471.300 184.300L464 212.300L435.700 226.700L407.700 218.300L399.300 240.700L400.300 268.300L403.700 295L407.700 315L419.500 352.500L416.700 366.700L407.300 390L400 430L392.700 453.300L385 472.700L381 493.300L385 523.300L390 555L395 575L406.700 603.300L422.300 635L431.700 661.700L436 668.300L464.300 673.700L493.300 660.700L521.700 648.700L541 634L549.300 630.700L568.300 607.300L590 600L613.300 577.700L613 549.300L632.700 520.700L661 532.700L677.700 549.300L699.300 577.700L716 591L731.700 600.300L761.700 605.700"/>
<path d="M776 605.700L800.700 600L816.700 577.700L825 550L822.300 493.300L816.700 456.700L811.700 430L802 393.300L794 380L781.700 352.700L802 319.300L810 288.300L824 228.300L824.700 206L813.300 184.300L824 173.300L829.300 170.300"/>
<path d="M489 156L478 160.300L484 184.300L485.700 212.300L464 245L443.300 267.700L438.700 296.700L442.300 325L446.700 352.500L436 375L423.300 410L407.300 440.700L400 465L387 493.300L398.700 523.300L406.700 553.300L409.300 560L418.300 574L436.700 600.700L464.300 627.700L492.700 630.300L521 618.700L541 605.700L560.700 594.300L580 586.300L596.500 577.700L592.300 549.300L605 520.700L626 494L632.700 486L661 500.700L688.300 523.300L711 550L727 577.700L743.300 586.700L771 595L802.700 579.300L808.300 548.300L809.300 523.300L807.300 493.300L802 456.700L790 435L772.700 401.700L743.300 352.500L745.700 323.300L741.700 296L717.300 281.700L706.700 267.700L689.700 240L686 211.700L690 184.300L694 160.300L687.300 156"/>
<path d="M509 156L498 160.300L502.300 181.700L511.300 212.300L505.300 240.700L493 267.700L485.300 296L486.300 325L481.500 352.500L463.300 385L452.700 410L416.700 473.300L406.300 491.700L407.300 495.700L416.700 513.300L435.700 541.700L464.300 579L492.700 591.700L521 590L549.300 584L562.300 577.700L565.300 550L574 521.700L587.300 492.700L605 465L632.700 439.300L661 449L686.700 460L717.300 473.700L735.700 465L731 436.700L722.300 408.300L703 365L686.700 325L676.700 295L670.700 268.300L668 240L668.700 211.700L674.700 184.300L677.300 160.300L658.300 156.300"/>
<path d="M524.300 156L516 160.300L520 184.300L531.700 212.300L530.300 240.700L524 267.700L520.300 296L525.700 325L519.700 338.300L514 353.300L498.300 380L492.300 389.300L481.700 410L464.300 435L450 465L442.700 492.700L446.700 506.700L453.300 523.300L463.300 537.300L476 549L492.300 558.300L521 559.700L534 549.300L548.700 523.300L559 491.700L570 466.700L605 404.300L631.700 385.700L640.700 381L653.300 352.700L652.300 323.300L649.300 288.300L648 268.300L649.700 240L654.300 211.700L661.700 196.700L664.300 184.300L660 160.300L641.700 156.300"/>
<path d="M570.700 156L559.700 160.300L563.300 183.300L576.700 225.700L604 235.300L617.300 213.300L632.700 199.300L639.700 184.300L636 160.300L600 156.300L593.300 155.700"/>
<path d="M698.300 156.300L702 160.300L700 212.700L717.300 241.700L745.700 240L774 220.300L780 210L802 161.700L816 156.300M707.700 156.300L709.700 160.300L713.300 211.700L717.300 218L746.700 212.300L762 183.700L773.700 175.700L783.700 160.300L806 156.300M825.300 156.300L829.300 160.300"/>
<path d="M829 181L828 185L828 245L825 311.700L822.700 325L811.300 352.500L819 383.300L825 415L827 483.300L828 540L827 577.700L829.300 583.300M817.300 605.700L825 601.700L829.300 596.700"/>
<path d="M609.300 605.700L609 600L625 577.700L632.700 550L661 561L676 577.700L701.700 600.300L725.700 605.700M592 604L594.500 606"/>
</g>
<path class="edge" d="M379.500 155.500H829.500V605.500H594.500V774.500H379.500Z"/>
<path class="inner" d="M395.500 171.500V758.500M395.500 171.500H813.500M813.500 176V589.500M578.500 589.500H813.500M578.500 589.500V758.500M395.500 758.500H578.500"/>
<path class="arrow" d="M573 427.500L602 428.500M573 427.500L580 425M602 428.500L594 431.500"/>
<g class="tags">
<path d="M584.500 226L586 229L590 226M446 511L448 513L443 510M437 541L435 543L442 541M416 573L418 575L412 573M408 602L407 604L413 602M390 630L392 632L386 630"/>
<rect x="584.500" y="209.500" width="33" height="16"/><text x="588" y="221">6.26</text>
<rect x="413.500" y="494.500" width="33" height="16"/><text x="417" y="506">5.24</text>
<rect x="436.500" y="524.500" width="33" height="16"/><text x="440" y="537">4.50</text>
<rect x="384.500" y="556.500" width="33" height="16"/><text x="388" y="569">3.35</text>
<rect x="407.500" y="585.500" width="33" height="16"/><text x="411" y="597">2.25</text>
<rect x="357.500" y="613.500" width="33" height="16"/><text x="361" y="625">1.13</text>
</g>
</svg>
<div class="caption"><p>Nutná výztuž a-s,1,+z (dolní) [cm^2/m]</p><p>RF-CONCRETE Surfaces PŘ1 - Stahlbeton-Bemessung</p></div>
</section>
</main>
</body>
</html>
```
FILE: styles.css
```css
* { box-sizing: border-box; margin: 0; padding: 0; }

body {
  display: flex;
  flex-direction: column;
  height: 100vh;
  overflow: hidden;
  background: #d0d3dc;
  color: #000;
  font: 11px/18px "Open Sans", "Noto Sans", sans-serif;
}

button { flex: none; border: 0; background: none; font: inherit; }
ul { list-style: none; }
.defs { position: absolute; width: 0; height: 0; }

/* Title and menu */
.titlebar { display: flex; flex: none; align-items: center; gap: 5px; height: 23px; background: #fff; }
.titlebar h1 { flex: 1; font-size: 11px; font-weight: 400; }
.logo { width: 14px; height: 18px; }
.winedge { align-self: flex-start; width: 79px; height: 1px; background: linear-gradient(to right, #0078d7 48px, #dcdcdc 48px); }

.menubar { display: flex; flex: none; align-items: center; gap: 15px; height: 24px; color: #474b57; white-space: nowrap; }
.menubar .grip { margin-right: -15px; }
.menubar a { color: inherit; text-decoration: none; }
.mdi { width: 16px; height: 13px; margin-right: -5px; flex: none; }

.grip {
  flex: none;
  width: 6px;
  height: 14px;
  background: repeating-linear-gradient(to bottom, #b4b8c4 0 2px, transparent 2px 4px) 0 0 / 2px 100% no-repeat;
}

/* Toolbars */
.toolbar {
  display: flex;
  flex: none;
  align-items: center;
  height: 26px;
  overflow: hidden;
  background: linear-gradient(#eff1f7, #dadee8);
  border-bottom: 1px solid #b4b8c3;
}
.toolbar button { display: flex; align-items: center; justify-content: center; width: 22px; height: 22px; }
.toolbar svg { width: 16px; height: 16px; }
.toolbar .on { border: 1px solid #c29b63; background: linear-gradient(#ffd9a0, #ffc167 50%, #ffe08c); }
.toolbar .off { opacity: 0.4; }
.sep { flex: none; width: 8px; height: 14px; background: linear-gradient(to right, transparent 3px, #b4b9c6 3px 4px, #fff 4px 5px, transparent 5px); }
.grip.mid { width: 12px; background-position: 3px 0; }
.model-bar { height: 27px; border-bottom: 2px solid #777a84; }
.model-bar .sep { width: 6px; }
.model-bar .mid { width: 10px; }
.toolbar .dd { width: 14px; }
.dd::before, .combo-arrow::before { content: ""; border: 3px solid transparent; border-top-color: #73777f; border-bottom: 0; }

.combo { display: flex; position: relative; flex: none; width: 215px; height: 19px; margin: 0 3px 0 2px; background: #fff; }
.combo select { width: 100%; padding: 0 16px 0 3px; border: 0; appearance: none; background: #fff; color: #000; font: inherit; }
.combo-arrow { display: flex; position: absolute; top: 1px; right: 1px; bottom: 1px; width: 13px; align-items: center; justify-content: center; background: #e6e9f1; pointer-events: none; }

/* Navigator */
.work { display: flex; flex: 1; min-height: 0; }
.nav { display: flex; flex: none; flex-direction: column; width: 272px; margin-right: 4px; border-right: 1px solid #9a9eaa; background: #eaedf4; }
.nav-head { display: flex; flex: none; align-items: center; gap: 8px; height: 19px; padding-right: 5px; background: #b9bfcb; color: #363b48; }
.nav-head h2 { flex: 1; font-size: 11px; font-weight: 400; }
.nav-head button { display: flex; width: 9px; }
.nav-head svg { width: 9px; height: 9px; }
.nav-body { display: flex; position: relative; flex: 1; min-height: 0; margin: 3px 3px 0 0; }
.marker { position: absolute; top: 390px; right: 1px; width: 180px; height: 28px; background: rgba(255, 240, 0, 0.5); pointer-events: none; }

.tree { flex: 1; min-width: 0; padding-left: 1px; overflow: hidden; background: #fcfcf5; white-space: nowrap; }
.tree ul { padding-left: 19px; }
.tree li { background: repeating-linear-gradient(to bottom, #85857f 0 1px, transparent 1px 2px) 9px 0 / 1px 100% no-repeat; }
.tree li:last-child:not(.more) { background-size: 1px 10px; }
.row { display: flex; height: 18px; padding-left: 5px; background: repeating-linear-gradient(to right, #85857f 0 1px, transparent 1px 2px) 9px 10px / 12px 1px no-repeat; }
.row label { display: flex; flex: 1; padding-left: 17px; }
.exp + label { padding-left: 8px; }
.row svg { flex: none; width: 16px; height: 16px; margin: 1px 5px 0 2px; }

.exp {
  width: 9px;
  height: 9px;
  margin-top: 6px;
  border: 1px solid #8e8e8e;
  border-radius: 1px;
  background:
    linear-gradient(#2c4a9c, #2c4a9c) center / 5px 1px no-repeat,
    linear-gradient(#2c4a9c, #2c4a9c) center / 1px 5px no-repeat,
    #f4f4f2;
}
.exp.open { background: linear-gradient(#2c4a9c, #2c4a9c) center / 5px 1px no-repeat, #f4f4f2; }

.tree input { flex: none; width: 13px; height: 13px; margin-top: 2px; border: 1px solid #4b4c52; appearance: none; background: linear-gradient(135deg, #fff, #cdd4e2); }
.tree input::before { content: ""; display: block; width: 11px; height: 11px; }
.tree input:checked::before { background: #111; clip-path: polygon(1px 5px, 3px 4px, 5px 6px, 8px 2px, 10px 2px, 10px 3px, 5px 9px, 4px 9px); }
.tree input.mixed::before { background: #999; clip-path: inset(2px); }
.tree input[type="radio"] { border-radius: 50%; }
.tree input[type="radio"]:checked::before { clip-path: circle(3px at 50% 50%); }

.scroll { display: flex; flex: none; flex-direction: column; width: 15px; background: #f0f0f0; }
.scroll svg { width: 15px; height: 18px; margin-bottom: 25px; }
.thumb { height: 62%; background: #cdcdcd; }

/* Model view */
.view { position: relative; flex: 1; min-width: 0; border-left: 2px solid #5d5f66; border-top: 1px solid #5d5f66; background: #fff; }
.plot { display: block; width: 100%; height: 100%; }
.iso path { fill: none; stroke: #000; stroke-width: 2; stroke-linejoin: round; }
.edge { fill: none; stroke: #f00; }
.inner { fill: none; stroke: #f00; stroke-dasharray: 12 4; }
.arrow { fill: none; stroke: #f00; stroke-width: 2; }
.tags path { fill: #ffff4d; stroke: #000; }
.tags rect { fill: #ff0; fill-opacity: 0.7; stroke: #000; }
.tags text { fill: #00f; font: 11px "Liberation Mono", monospace; }
.caption { position: absolute; top: 5px; left: 4px; font: 11px/14px "Liberation Sans", Arial, sans-serif; }
```
